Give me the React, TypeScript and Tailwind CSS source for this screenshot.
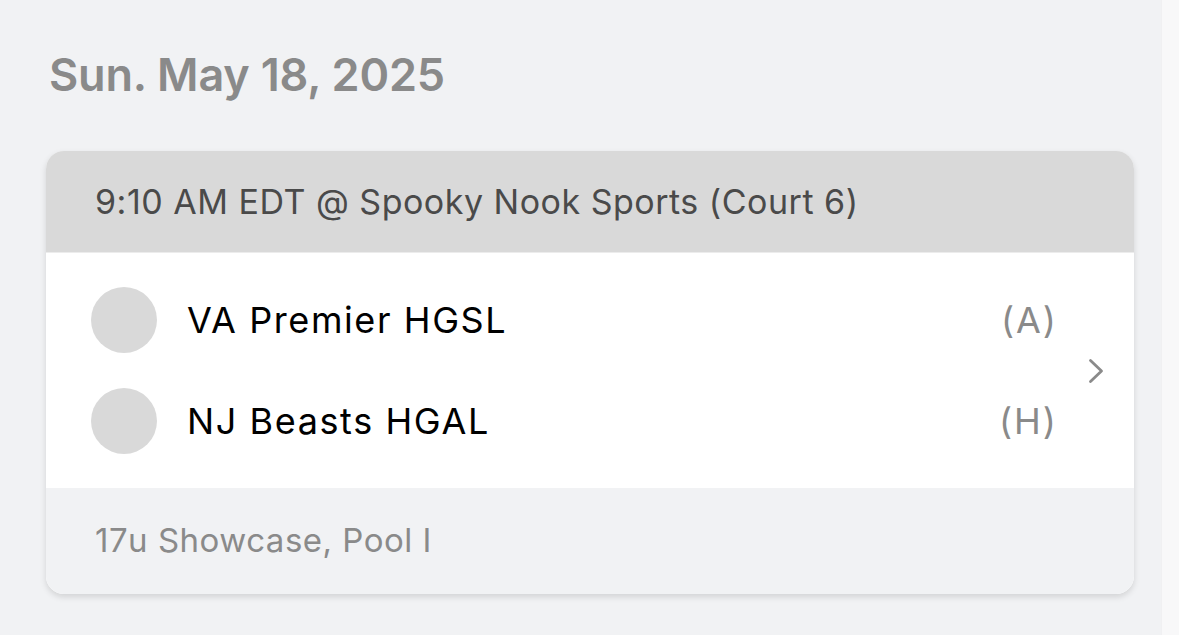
import React from "react";

const teams = [
  { name: "VA Premier HGSL", side: "(A)" },
  { name: "NJ Beasts HGAL", side: "(H)" },
];

export default function App() {
  return (
    <div
      className="flex h-[635px] w-[1179px] overflow-hidden bg-[#f1f2f4]"
      style={{ fontFamily: "Inter, 'Noto Sans', sans-serif" }}
    >
      <div className="flex-1 pl-[46px] pr-[27px]">
        {/* Date heading */}
        <h1 className="pl-[3px] pt-[47px] text-[45px] font-semibold leading-[56px] tracking-[-0.2px] text-[#8a8a8a]">
          Sun. May 18, 2025
        </h1>

        {/* Game card */}
        <div className="mt-[48px] overflow-hidden rounded-[18px] bg-white shadow-[0_3px_6px_rgba(0,0,0,0.13)]">
          <div className="flex h-[102px] items-center border-b border-[#ececec] bg-[#d9d9d9] px-[49px] text-[34px] tracking-[0.5px] text-[#4a4a4a]">
            9:10 AM EDT @ Spooky Nook Sports (Court 6)
          </div>

          <div className="flex items-center bg-white pr-[29px]">
            <div className="flex flex-1 flex-col gap-[35px] py-[34px] pl-[45px] pr-[29px]">
              {teams.map((t) => (
                <div key={t.name} className="flex h-[66px] items-center">
                  <div className="h-[66px] w-[66px] shrink-0 rounded-full bg-[#d9d9d9]" />
                  <span className="ml-[30px] flex-1 text-[36px] tracking-[1.6px] text-black">{t.name}</span>
                  <span className="text-[36px] tracking-[2px] text-[#8a8a8a]">{t.side}</span>
                </div>
              ))}
            </div>
            <svg width="18" height="26" viewBox="0 0 18 26" fill="none">
              <path
                d="M3.5 2.5l11 10.5-11 10.5"
                stroke="#8a8a8a"
                strokeWidth="2.8"
                strokeLinecap="round"
                strokeLinejoin="round"
              />
            </svg>
          </div>

          <div className="flex h-[106px] items-center bg-[#f1f2f4] px-[49px] text-[33px] tracking-[0.5px] text-[#8a8a8a]">
            17u Showcase, Pool I
          </div>
        </div>
      </div>
      <div className="w-[18px] border-l border-[#f0f0f2] bg-[#f8f8f9]" />
    </div>
  );
}
